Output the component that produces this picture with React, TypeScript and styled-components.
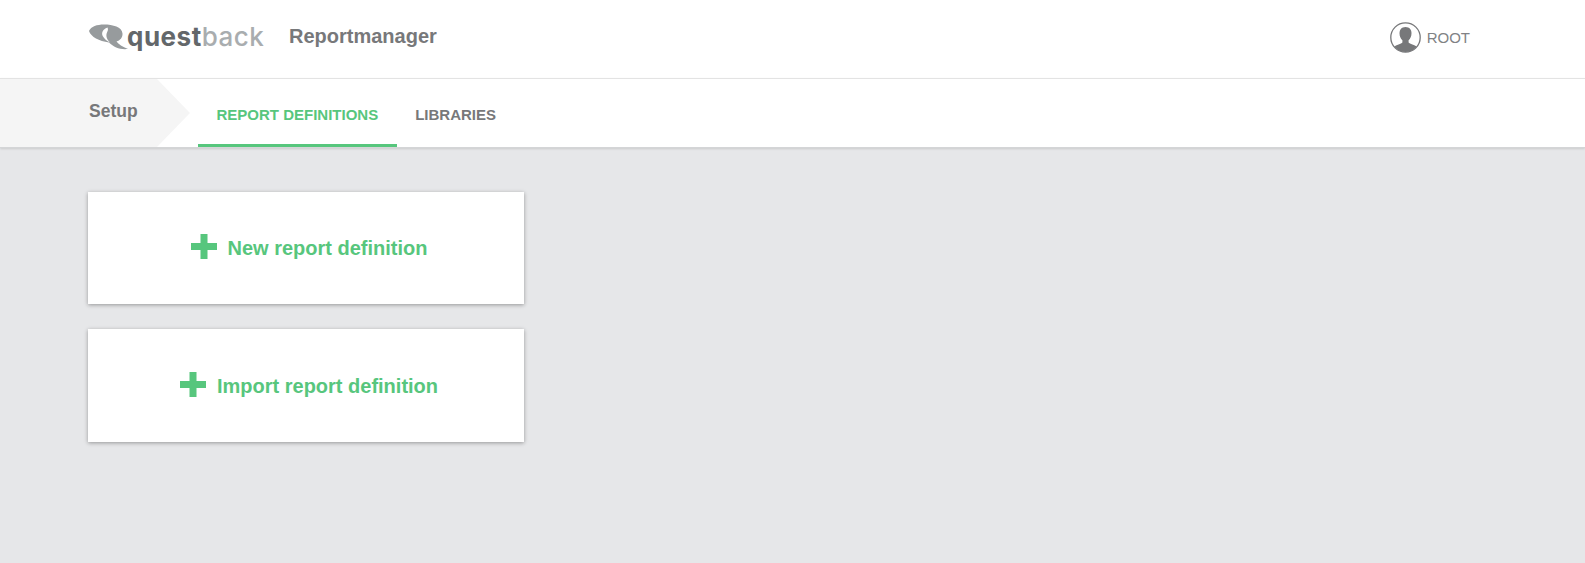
import React from "react";
import styled, { createGlobalStyle } from "styled-components";

const Global = createGlobalStyle`
  html, body { margin: 0; padding: 0; height: 100%; background: #e6e7e9; }
  body { font-family: "Liberation Sans", Arial, sans-serif; overflow: hidden; }
`;

const Page = styled.div`
  min-height: 563px;
  background: #e6e7e9;
`;

const Header = styled.header`
  height: 78px;
  background: #fff;
  display: flex;
  align-items: center;
  padding: 0 115px 6px 88px;
  box-sizing: border-box;
`;

const Logo = styled.div`
  display: flex;
  align-items: center;
  width: 176px;
  margin-right: 25px;
`;

const LogoMark = styled.svg`
  width: 41px;
  height: 27px;
  flex: none;
  margin: 3px -2px 0 0;
`;

const LogoWord = styled.span<{ $light?: boolean }>`
  font-family: "Inter", sans-serif;
  font-weight: ${(p) => (p.$light ? 500 : 700)};
  font-size: 26px;
  line-height: 30px;
  letter-spacing: 0.5px;
  margin-top: 2px;
  color: ${(p) => (p.$light ? "#a9adaf" : "#63676a")};
`;

const AppTitle = styled.h1`
  margin: 0;
  font-size: 20px;
  font-weight: 700;
  color: #77787a;
  flex: 1;
`;

const UserBox = styled.div`
  display: flex;
  align-items: center;
  gap: 6px;
  margin-top: 2px;
  color: #808285;
  font-size: 15px;
`;

const Nav = styled.nav`
  height: 70px;
  box-sizing: border-box;
  background: #fff;
  border-top: 1px solid #e3e3e3;
  border-bottom: 1px solid #d4d5d7;
  box-shadow: 0 1px 2px rgba(0, 0, 0, 0.12);
  display: flex;
  align-items: stretch;
`;

const SetupCrumb = styled.div`
  width: 190px;
  padding: 22px 0 0 89px;
  box-sizing: border-box;
  background: #f5f5f5;
  clip-path: polygon(0 0, 157px 0, 100% 50%, 157px 100%, 0 100%);
  font-size: 17.5px;
  font-weight: 700;
  color: #77787a;
  margin-right: 8px;
`;

const Tab = styled.a<{ $active?: boolean }>`
  display: block;
  padding: 28px 18.5px 0;
  box-sizing: border-box;
  font-size: 15px;
  font-weight: 700;
  line-height: 16px;
  color: ${(p) => (p.$active ? "#57c67d" : "#77787a")};
  border-bottom: 3px solid ${(p) => (p.$active ? "#57c67d" : "transparent")};
`;

const Content = styled.main`
  padding: 44px 0 0 88px;
  display: flex;
  flex-direction: column;
  gap: 25px;
`;

const Card = styled.button<{ $h: number; $offset?: number }>`
  width: 436px;
  height: ${(p) => p.$h}px;
  border: 0;
  padding: ${(p) => p.$offset ?? 0}px 0 0 6px;
  background: #fff;
  box-shadow: 0 1px 4px rgba(0, 0, 0, 0.35);
  display: flex;
  align-items: center;
  justify-content: center;
  gap: 11px;
  font-family: inherit;
  font-size: 20px;
  font-weight: 700;
  color: #57c67d;
`;

const Plus = styled.svg`
  width: 26px;
  height: 25px;
  flex: none;
  margin-top: -3px;
`;

const PlusIcon = () => (
  <Plus viewBox="0 0 26 25">
    <path d="M9.500 0h7v9h9.500v7h-9.500v9h-7v-9H0V9h9.500z" fill="#57c67d" />
  </Plus>
);

export default function App() {
  return (
    <Page>
      <Global />
      <Header>
        <Logo>
          <LogoMark viewBox="0 0 41 27">
            <path
              d="M1 7C3 2.500 9 .5 16 .5c9 0 18 2.500 18.500 9 .3 4-2.500 7-6 8 2 2.500 6 5.500 11.500 7.500-8 .8-14-1.500-19-6.500C11 17 3 13 1 7z"
              fill="#979b9d"
            />
            <path
              d="M19.500 3.500c-5 2-6.500 5.500-4.500 9 1.500 2.500 4 4.500 7 6-3-3-4.500-6.500-3-10 .7-1.600 1.500-3 .5-5z"
              fill="#fff"
            />
          </LogoMark>
          <LogoWord>quest</LogoWord>
          <LogoWord $light>back</LogoWord>
        </Logo>
        <AppTitle>Reportmanager</AppTitle>
        <UserBox>
          <svg width="31" height="31" viewBox="0 0 31 31">
            <defs>
              <clipPath id="avatar">
                <circle cx="15.5" cy="15.5" r="14.5" />
              </clipPath>
            </defs>
            <g clipPath="url(#avatar)" fill="#77787a">
              <path d="M15.500 5c-4 0-6 2.800-6 6.300 0 3 1.200 5.600 2.900 7v2.300c-1 1.500-6.400 2-8.400 4.600V31h23v-5.800c-2-2.600-7.400-3.100-8.400-4.600v-2.300c1.700-1.400 2.900-4 2.900-7C21.500 7.800 19.500 5 15.500 5z" />
            </g>
            <circle cx="15.5" cy="15.5" r="14.7" fill="none" stroke="#77787a" strokeWidth="1.300" />
          </svg>
          ROOT
        </UserBox>
      </Header>
      <Nav>
        <SetupCrumb>Setup</SetupCrumb>
        <Tab $active>REPORT DEFINITIONS</Tab>
        <Tab>LIBRARIES</Tab>
      </Nav>
      <Content>
        <Card $h={112}>
          <PlusIcon />
          New report definition
        </Card>
        <Card $h={113} $offset={1}>
          <PlusIcon />
          Import report definition
        </Card>
      </Content>
    </Page>
  );
}
